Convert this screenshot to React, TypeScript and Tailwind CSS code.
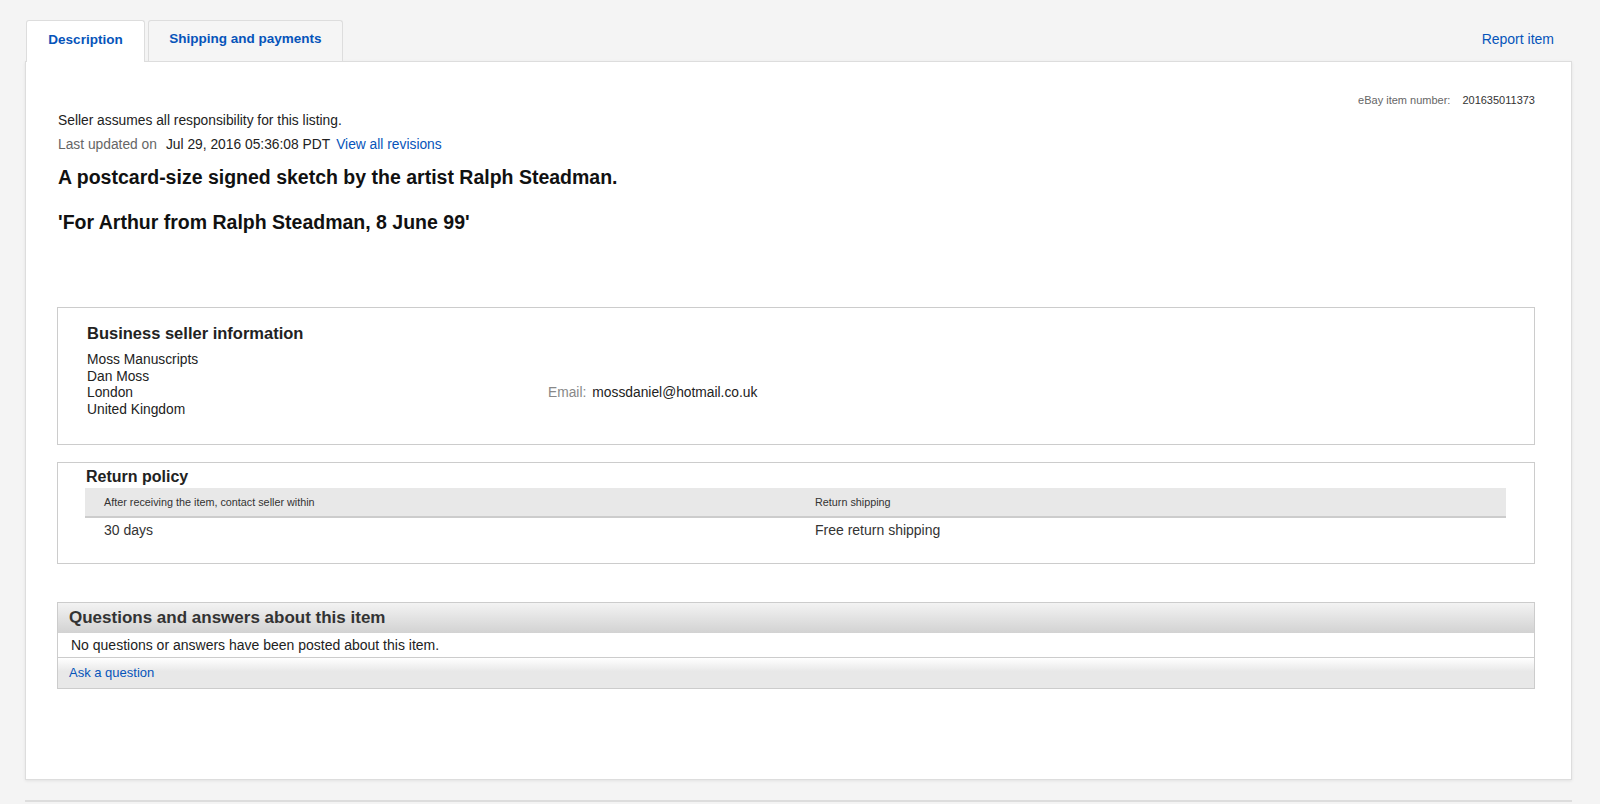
import React from "react";

const font = { fontFamily: '"Liberation Sans", Arial, Helvetica, sans-serif' };

function BusinessSeller() {
  return (
    <div className="border border-[#cccccc] pl-[29px] pt-[15px] pb-[26px]">
      <h3 className="text-[16.5px] font-bold leading-[20px] text-[#222]">Business seller information</h3>
      <div className="mt-[9px] flex text-[13.8px] leading-[16.5px] text-[#222]">
        <div className="w-[461px]">
          <div>Moss Manuscripts</div>
          <div>Dan Moss</div>
          <div>London</div>
          <div>United Kingdom</div>
        </div>
        <div className="mt-[33px]">
          <span className="text-[#888]">Email:</span>
          <span className="ml-[6px]">mossdaniel@hotmail.co.uk</span>
        </div>
      </div>
    </div>
  );
}

function ReturnPolicy() {
  return (
    <div className="mt-[17px] border border-[#cccccc] pt-[3px] pb-[21px] pl-[27px] pr-[28px]">
      <h3 className="pl-[1px] text-[16px] font-bold leading-[22px] text-[#222]">Return policy</h3>
      <div className="grid grid-cols-[730px_1fr] bg-[#e8e8e8] border-b-2 border-[#cccccc] h-[30px] items-center text-[10.8px] text-[#333]">
        <div className="pl-[19px]">After receiving the item, contact seller within</div>
        <div>Return shipping</div>
      </div>
      <div className="grid grid-cols-[730px_1fr] h-[24px] items-center text-[14px] text-[#333]">
        <div className="pl-[19px]">30 days</div>
        <div>Free return shipping</div>
      </div>
    </div>
  );
}

function Questions() {
  return (
    <div className="mt-[38px] border border-[#cccccc]">
      <div className="h-[30px] flex items-center pl-[11px] bg-gradient-to-b from-[#f3f3f3] to-[#d2d2d2] text-[17px] font-bold text-[#333]">
        Questions and answers about this item
      </div>
      <div className="h-[25px] flex items-center pl-[13px] bg-white border-b border-[#cccccc] text-[14px] text-[#222]">
        No questions or answers have been posted about this item.
      </div>
      <div className="h-[30px] flex items-center pl-[11px] bg-[linear-gradient(to_bottom,#ffffff_0%,#e8e8e8_45%,#e8e8e8_100%)] text-[13px]">
        <a className="text-[#0654ba]" href="#">Ask a question</a>
      </div>
    </div>
  );
}

export default function App() {
  return (
    <div className="min-h-[804px] bg-[#f4f4f4] pt-[20px]" style={font}>
      <div className="ml-[25px] w-[1547px]">
        <div className="flex items-end h-[41px]">
          <div className="relative z-10 -mb-[1px] h-[42px] w-[119px] ml-[1px] bg-white border border-b-0 border-[#dddddd] rounded-t-[3px] flex items-center justify-center pb-[3px] text-[13.5px] font-bold text-[#0654ba]">
            Description
          </div>
          <div className="ml-[3px] h-[41px] w-[195px] bg-[#f5f5f5] border border-b-0 border-[#dddddd] rounded-t-[3px] flex items-center justify-center pb-[3px] text-[13.5px] font-bold text-[#0654ba]">
            Shipping and payments
          </div>
          <div className="flex-1" />
          <a href="#" className="self-center mr-[18px] pb-[3px] text-[14px] text-[#0654ba]">Report item</a>
        </div>
        <div className="h-[719px] bg-white border border-[#dddddd] shadow-[0_1px_3px_rgba(0,0,0,0.08)] pt-[31px] pl-[32px] pr-[36px]">
          <div className="text-right text-[11px] leading-[14px] text-[#333]">
            <span className="text-[#666]">eBay item number:</span>
            <span className="ml-[12px]">201635011373</span>
          </div>
          <div className="mt-[5px] text-[13.8px] leading-[18px] text-[#222]">Seller assumes all responsibility for this listing.</div>
          <div className="mt-[6px] text-[13.8px] leading-[18px] text-[#222]">
            <span className="text-[#666]">Last updated on</span>
            <span className="ml-[9px]">Jul 29, 2016 05:36:08 PDT</span>
            <a href="#" className="ml-[6px] text-[#0654ba]">View all revisions</a>
          </div>
          <h1 className="mt-[12px] text-[19.5px] font-bold leading-[22px] text-[#111]">
            A postcard-size signed sketch by the artist Ralph Steadman.
          </h1>
          <h1 className="mt-[23px] text-[19.5px] font-bold leading-[22px] text-[#111]">
            'For Arthur from Ralph Steadman, 8 June 99'
          </h1>
          <div className="mt-[74px] -ml-[1px]">
            <BusinessSeller />
            <ReturnPolicy />
            <Questions />
          </div>
        </div>
        <div className="mt-[20px] h-[2px] bg-[#dddddd]" />
      </div>
    </div>
  );
}
